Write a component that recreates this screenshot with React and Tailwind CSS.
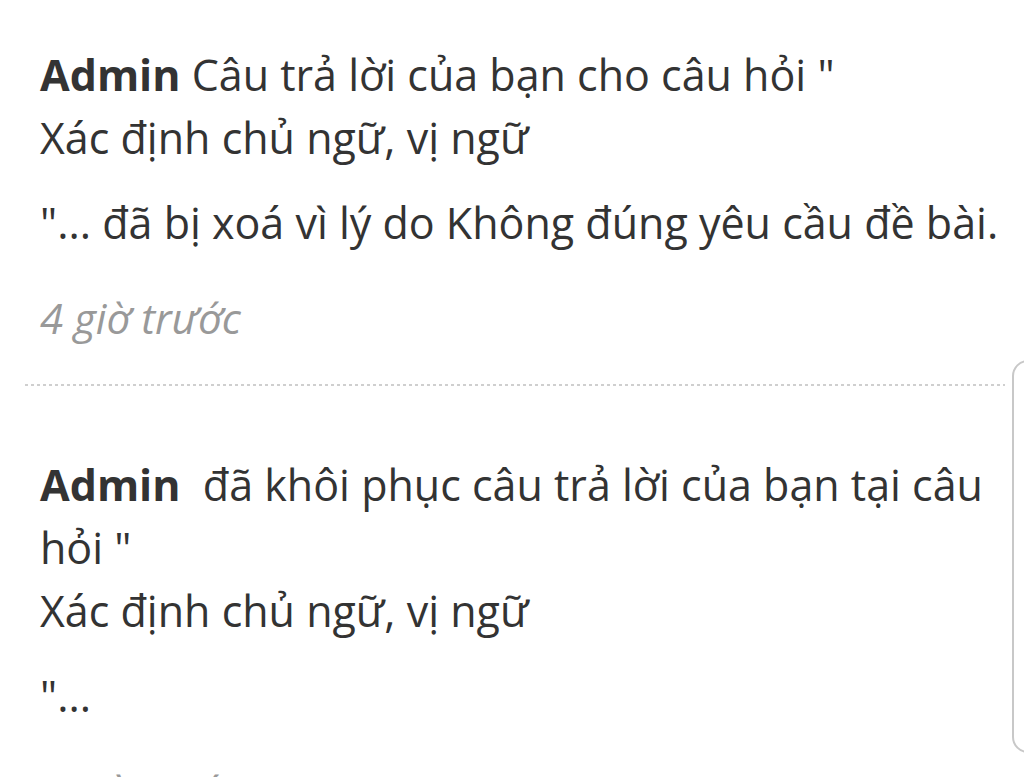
const NOTICES = [
  {
    id: 1,
    action: 'Câu trả lời của bạn cho câu hỏi "',
    gap: ' ',
    question: 'Xác định chủ ngữ, vị ngữ',
    tail: '"... đã bị xoá vì lý do Không đúng yêu cầu đề bài.',
    time: '4 giờ trước',
  },
  {
    id: 2,
    action: 'đã khôi phục câu trả lời của bạn tại câu hỏi "',
    gap: '\u00a0\u00a0',
    question: 'Xác định chủ ngữ, vị ngữ',
    tail: '"...',
    time: '4 giờ trước',
  },
]

function NoticeItem({ notice, last }) {
  return (
    <li className="pl-[15px]">
      <div className="pt-[43px] text-[43px] leading-[63px] text-[#333]">
        <span className="font-bold">Admin</span>
        {notice.gap}
        {notice.action}
        <p className="mb-[22px]">{notice.question}</p>
        <p>{notice.tail}</p>
      </div>
      <p className="mt-[37px] text-[42px] italic leading-[53px] text-[#999]">{notice.time}</p>
      {!last ? (
        <div className="mb-[24px] ml-[-15px] mt-[40px] h-[2px] bg-[linear-gradient(to_right,#cfcfcf_50%,transparent_50%)] bg-[length:6px_2px] bg-repeat-x" />
      ) : null}
    </li>
  )
}

function App() {
  return (
    <div className="flex h-[777px] w-[1024px] overflow-hidden bg-white font-['Open_Sans',sans-serif]">
      <ul className="ml-[25px] w-[980px] shrink-0">
        {NOTICES.map((notice, index) => (
          <NoticeItem key={notice.id} notice={notice} last={index === NOTICES.length - 1} />
        ))}
      </ul>
      <aside className="ml-[7px] mt-[360px] h-[393px] w-[60px] shrink-0 rounded-[16px] border-2 border-[#c8c8c8] bg-white" />
    </div>
  )
}

export default App
